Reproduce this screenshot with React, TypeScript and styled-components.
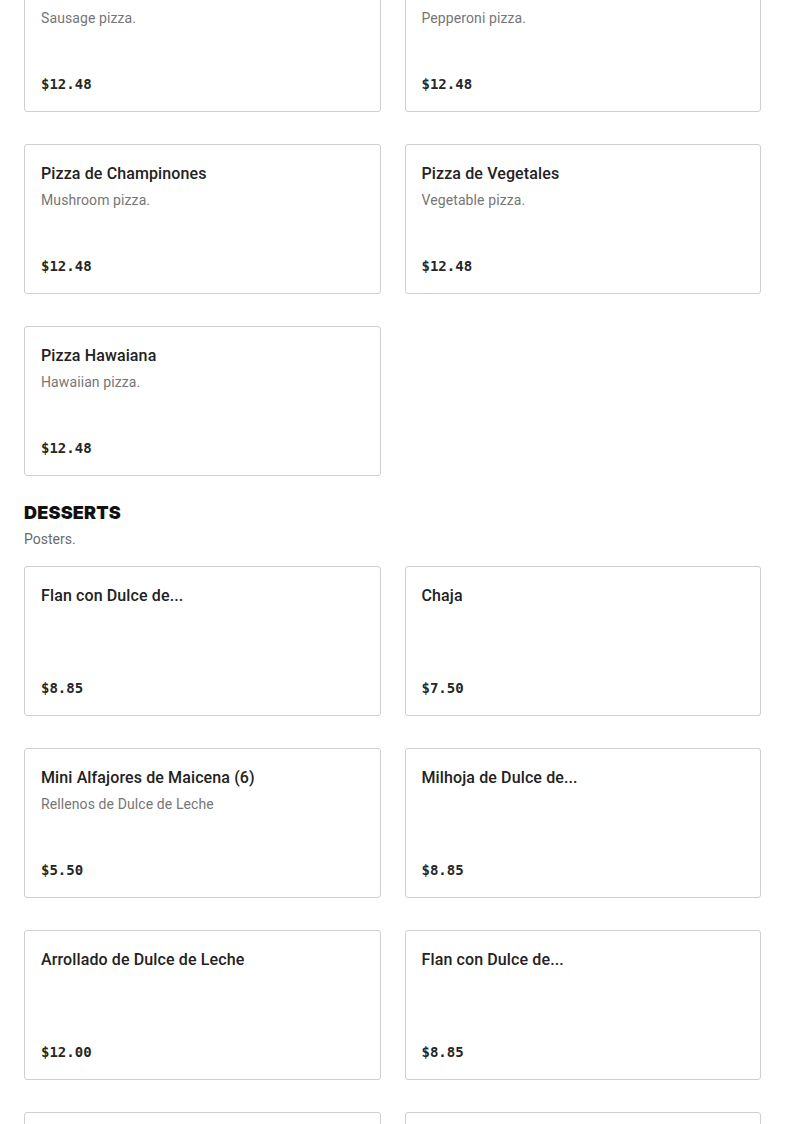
import styled, { createGlobalStyle } from 'styled-components';

const GlobalStyle = createGlobalStyle`
  html, body {
    margin: 0;
    padding: 0;
    background: #ffffff;
  }
  body {
    font-family: Roboto, "Noto Sans", sans-serif;
    color: #1f1f1f;
  }
`;

type Item = { name: string; description?: string; price: string };
type Section = { title?: string; subtitle?: string; items: Item[] };

const sections: Section[] = [
  {
    items: [
      { name: 'Pizza de Salchicha', description: 'Sausage pizza.', price: '$12.48' },
      { name: 'Pizza de Pepperoni', description: 'Pepperoni pizza.', price: '$12.48' },
      { name: 'Pizza de Champinones', description: 'Mushroom pizza.', price: '$12.48' },
      { name: 'Pizza de Vegetales', description: 'Vegetable pizza.', price: '$12.48' },
      { name: 'Pizza Hawaiana', description: 'Hawaiian pizza.', price: '$12.48' },
    ],
  },
  {
    title: 'DESSERTS',
    subtitle: 'Posters.',
    items: [
      { name: 'Flan con Dulce de...', price: '$8.85' },
      { name: 'Chaja', price: '$7.50' },
      { name: 'Mini Alfajores de Maicena (6)', description: 'Rellenos de Dulce de Leche', price: '$5.50' },
      { name: 'Milhoja de Dulce de...', price: '$8.85' },
      { name: 'Arrollado de Dulce de Leche', price: '$12.00' },
      { name: 'Flan con Dulce de...', price: '$8.85' },
      { name: 'Torta de Ricota', price: '$9.50' },
      { name: 'Pastafrola', price: '$7.50' },
    ],
  },
];

const Page = styled.main`
  padding: 0 24px 40px;
  margin-top: -38px;
  display: flex;
  flex-direction: column;
  gap: 25px;
`;

const SectionBlock = styled.section`
  display: flex;
  flex-direction: column;
`;

const SectionTitle = styled.h2`
  margin: 0;
  font-family: Inter, "Noto Sans", sans-serif;
  font-size: 18px;
  line-height: 24px;
  font-weight: 900;
  letter-spacing: 0.2px;
  color: #111111;
`;

const SectionSubtitle = styled.p`
  margin: 4px 0 17px;
  font-size: 14px;
  line-height: 20px;
  color: #6b6b6b;
`;

const Grid = styled.div`
  display: grid;
  grid-template-columns: 1fr 1fr;
  column-gap: 24px;
  row-gap: 32px;
`;

const Card = styled.article`
  box-sizing: border-box;
  height: 150px;
  border: 1px solid #cfcfcf;
  border-radius: 3px;
  padding: 17px 16px 16px;
  display: flex;
  flex-direction: column;
`;

const ItemName = styled.h3`
  margin: 0;
  font-size: 16px;
  line-height: 24px;
  font-weight: 500;
  letter-spacing: 0.12px;
  color: #222222;
  white-space: nowrap;
  overflow: hidden;
  text-overflow: ellipsis;
`;

const ItemDescription = styled.p`
  margin: 4px 0 0;
  font-size: 14px;
  line-height: 20px;
  letter-spacing: 0.1px;
  color: #767676;
`;

const Price = styled.span`
  margin-top: auto;
  margin-bottom: -1px;
  font-family: "DejaVu Sans Mono", "Liberation Mono", monospace;
  font-size: 14px;
  line-height: 24px;
  font-weight: 700;
  color: #262626;
`;

const App = () => {
  return (
    <>
      <GlobalStyle />
      <Page>
        {sections.map((section, i) => (
          <SectionBlock key={i}>
            {section.title && <SectionTitle>{section.title}</SectionTitle>}
            {section.subtitle && <SectionSubtitle>{section.subtitle}</SectionSubtitle>}
            <Grid>
              {section.items.map((item, j) => (
                <Card key={j}>
                  <ItemName>{item.name}</ItemName>
                  {item.description && <ItemDescription>{item.description}</ItemDescription>}
                  <Price>{item.price}</Price>
                </Card>
              ))}
            </Grid>
          </SectionBlock>
        ))}
      </Page>
    </>
  );
};

export default App;
